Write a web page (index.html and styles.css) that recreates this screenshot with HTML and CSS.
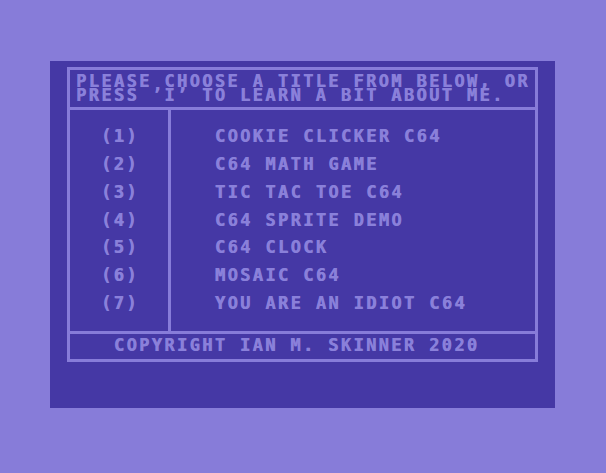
FILE: index.html
```html
<!DOCTYPE html>
<html>
<head>
<meta charset="utf-8">
<link rel="stylesheet" href="styles.css">
</head>
<body>
<div class="screen">
  <div class="frame">
    <div class="header">
      <p class="intro">PLEASE CHOOSE A TITLE FROM BELOW, OR<br>PRESS ’I’ TO LEARN A BIT ABOUT ME.</p>
    </div>
    <div class="menu">
      <div class="nums">
        <div class="line">(1)</div>
        <div class="line">(2)</div>
        <div class="line">(3)</div>
        <div class="line">(4)</div>
        <div class="line">(5)</div>
        <div class="line">(6)</div>
        <div class="line">(7)</div>
      </div>
      <div class="titles">
        <div class="line">COOKIE CLICKER C64</div>
        <div class="line">C64 MATH GAME</div>
        <div class="line">TIC TAC TOE C64</div>
        <div class="line">C64 SPRITE DEMO</div>
        <div class="line">C64 CLOCK</div>
        <div class="line">MOSAIC C64</div>
        <div class="line">YOU ARE AN IDIOT C64</div>
      </div>
    </div>
    <div class="footer">
      <div class="line">COPYRIGHT IAN M. SKINNER 2020</div>
    </div>
  </div>
</div>
</body>
</html>
```

FILE: styles.css
```css
html, body {
  margin: 0;
  padding: 0;
}
body {
  background: #877cd9;
  width: 606px;
  height: 473px;
  overflow: hidden;
}
.screen {
  box-sizing: border-box;
  margin: 61px 0 0 50px;
  width: 505px;
  height: 347px;
  background: #4538a5;
  padding: 6px 0 0 17px;
  color: #8a80da;
  font-family: "DejaVu Sans Mono", "Liberation Mono", monospace;
  font-weight: bold;
  font-size: 17px;
  letter-spacing: 2.37px;
  text-shadow: 0.6px 0 0 #8a80da;
}
.line {
  height: 13.88px;
  line-height: 13.88px;
  white-space: pre;
}
.intro {
  margin: 0;
  line-height: 13.88px;
  white-space: nowrap;
}
.frame {
  box-sizing: border-box;
  width: 471px;
  height: 295px;
  border: 3px solid #877cd9;
  display: flex;
  flex-direction: column;
}
.header {
  box-sizing: border-box;
  height: 40px;
  padding: 4.9px 0 0 6px;
  border-bottom: 3px solid #877cd9;
}
.menu {
  box-sizing: border-box;
  height: 224px;
  display: flex;
  border-bottom: 3px solid #877cd9;
}
.nums {
  box-sizing: border-box;
  width: 101px;
  border-right: 3px solid #877cd9;
  padding: 20.4px 0 0 31px;
  display: flex;
  flex-direction: column;
  gap: 13.88px;
}
.titles {
  padding: 20.4px 0 0 43.8px;
  display: flex;
  flex-direction: column;
  gap: 13.88px;
}
.footer {
  box-sizing: border-box;
  padding: 4.6px 0 0 43.8px;
}
```
